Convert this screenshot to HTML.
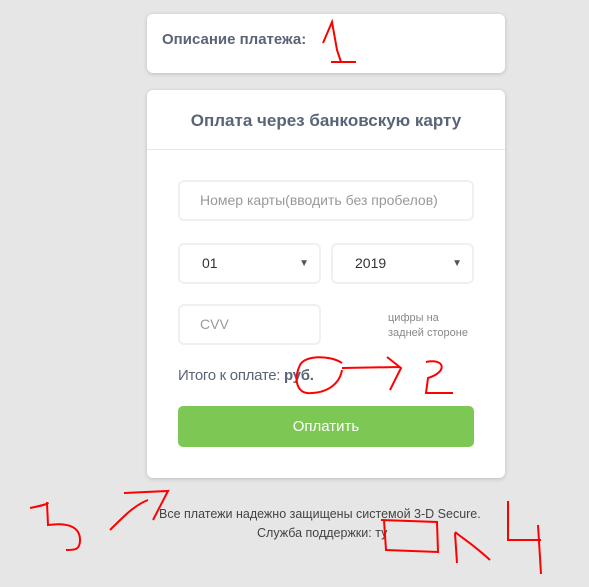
<!DOCTYPE html>
<html><head><meta charset="utf-8"><style>
*{box-sizing:border-box;margin:0;padding:0}
body{width:589px;height:587px;background:#e6e6e6;font-family:"Liberation Sans",sans-serif;position:relative;overflow:hidden}
.card{position:absolute;left:147px;width:358px;background:#fff;border-radius:6px;box-shadow:0 1px 4px rgba(0,0,0,.18)}
.ab{position:absolute}
.inp{position:absolute;border:2px solid #eef0f3;border-radius:6px;background:#fff;color:#999;font-size:14px;line-height:37px}
.arr{position:absolute;right:10px;top:0;font-size:10px;color:#555}
</style></head><body>
<div class="card" style="top:14px;height:59px">
 <div class="ab" style="left:15px;top:17px;font-size:15px;font-weight:bold;color:#5a6478">Описание платежа:</div>
</div>
<div class="card" style="top:90px;height:388px">
 <div class="ab" style="left:0;width:358px;top:21px;text-align:center;font-size:17px;font-weight:bold;color:#5a6478">Оплата через банковскую карту</div>
 <div class="ab" style="left:0;top:59px;width:358px;height:1px;background:#e4e7eb"></div>
</div>
<div class="inp" style="left:178px;top:180px;width:296px;height:41px;padding-left:20px">Номер карты(вводить без пробелов)</div>
<div class="inp" style="left:178px;top:243px;width:143px;height:41px;padding-left:22px;color:#333">01<span class="arr">▼</span></div>
<div class="inp" style="left:331px;top:243px;width:143px;height:41px;padding-left:22px;color:#333">2019<span class="arr">▼</span></div>
<div class="inp" style="left:178px;top:304px;width:143px;height:41px;padding-left:20px">CVV</div>
<div class="ab" style="left:388px;top:311px;font-size:11px;color:#888;line-height:15px">цифры на<br>задней стороне</div>
<div class="ab" style="left:178px;top:367px;font-size:15px;color:#5a6478;letter-spacing:-0.3px">Итого к оплате: <b>руб.</b></div>
<div class="ab" style="left:178px;top:406px;width:296px;height:41px;background:#7dc855;border-radius:5px;color:#fff;font-size:15px;text-align:center;line-height:41px">Оплатить</div>
<div class="ab" style="left:159px;width:340px;top:507px;font-size:12.5px;color:#444;white-space:nowrap">Все платежи надежно защищены системой 3-D Secure.</div>
<div class="ab" style="left:257px;top:526px;font-size:12.5px;color:#444">Служба поддержки: ту</div>
<svg class="ab" style="left:0;top:0" width="589" height="587" fill="none" stroke="#f00" stroke-width="2">
<path d="M323,43 L332,22 L337,50 L341,62 M331,62 L356,62"/>
<path d="M342,363 C330,355 305,355 300,365 C293,380 297,395 312,393 C330,392 340,382 342,370"/>
<path d="M342,368 L400,367 M387,357 L401,368 L390,390"/>
<path d="M426,362 C445,358 448,372 428,378 L426,393 L453,393"/>
<path d="M30,508 C45,505 50,503 47,503 L48,525 C70,522 80,528 80,540 C80,550 75,550 66,550"/>
<path d="M124,493 L168,491 L153,520 M110,530 C125,515 135,505 148,500"/>
<path d="M381,520 L437,522 L438,552 L386,550 L384,520"/>
<path d="M457,563 L455,533 M455,532 C465,540 475,546 490,560"/>
<path d="M508,501 L508,540 L541,540 M538,525 L541,574"/>
</svg>
</body></html>
